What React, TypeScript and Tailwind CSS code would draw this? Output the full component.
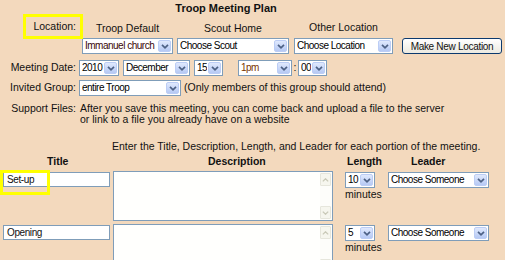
import React from "react";

const Chevron = () => (
  <svg width="8" height="5" viewBox="0 0 8 5">
    <path d="M1 0.8 L4 3.8 L7 0.8" fill="none" stroke="#4d6185" strokeWidth="1.7" />
  </svg>
);

type SelectProps = { value: string; width: string; color?: string };

const Select = ({ value, width, color = "text-black" }: SelectProps) => (
  <div className={`flex h-[16px] shrink-0 border border-[#7f9db9] bg-white ${width}`}>
    <span className={`flex-1 overflow-hidden whitespace-nowrap pl-[2px] text-[10px] leading-[14px] tracking-[-0.5px] ${color}`}>
      {value}
    </span>
    <span className="m-px flex w-[13px] items-center justify-center rounded-[2px] border border-[#bccdf5] bg-gradient-to-b from-[#e0e9fd] to-[#b6c9f4]">
      <Chevron />
    </span>
  </div>
);

const TextBox = ({ value }: { value: string }) => (
  <div className="h-[15px] w-[107px] border border-[#7f9db9] bg-white pl-[3px] text-[10px] leading-[13px] tracking-[-0.4px]">
    {value}
  </div>
);

const ScrollArrow = ({ up }: { up?: boolean }) => (
  <div className="flex h-[13px] w-[11px] items-center justify-center rounded-[1px] border border-[#e6e6dc] bg-[#f6f6ee]">
    <svg width="7" height="4" viewBox="0 0 7 4">
      <path
        d={up ? "M0.8 3.4 L3.5 0.8 L6.2 3.4" : "M0.8 0.6 L3.5 3.2 L6.2 0.6"}
        fill="none"
        stroke="#c9c9b8"
        strokeWidth="1.3"
      />
    </svg>
  </div>
);

const TextArea = () => (
  <div className="flex h-[50px] w-[220px] border border-[#7f9db9] bg-[#fffffd]">
    <div className="flex-1" />
    <div className="flex flex-col justify-between bg-[#fdfdfa] py-px pr-px">
      <ScrollArrow up />
      <ScrollArrow />
    </div>
  </div>
);

const portions = [
  { title: "Set-up", length: "10" },
  { title: "Opening", length: "5" },
];

export default function App() {
  return (
    <div className="relative h-[260px] w-[505px] overflow-hidden bg-[#f3d9bd] font-['Liberation_Sans',Arial,sans-serif] text-[10.5px] text-[#111]">
      <div className="w-[452px] pt-px text-center text-[11px] font-bold leading-[14px]">
        Troop Meeting Plan
      </div>

      {/* location */}
      <div className="mt-[6px] flex">
        <div className="-mt-[2px] w-[76px] text-right leading-[14px]">Location:</div>
        <div className="ml-[6px] flex w-[91px] flex-col items-center">
          <span className="leading-[14px]">Troop Default</span>
          <div className="mt-[3px]">
            <Select value="Immanuel church" width="w-[91px]" color="text-[#3a0808]" />
          </div>
        </div>
        <div className="ml-[4px] flex w-[112px] flex-col items-center">
          <span className="leading-[14px]">Scout Home</span>
          <div className="mt-[3px]">
            <Select value="Choose Scout" width="w-[112px]" />
          </div>
        </div>
        <div className="ml-[5px] flex w-[99px] flex-col items-center">
          <span className="-mt-px leading-[14px]">Other Location</span>
          <div className="mt-[4px]">
            <Select value="Choose Location" width="w-[99px]" />
          </div>
        </div>
        <div className="ml-[9px] mt-[17px]">
          <button className="h-[16px] w-[100px] rounded-[3px] border border-[#0c3a6e] bg-gradient-to-b from-white to-[#eceae0] text-[10px] leading-[13px] tracking-[-0.3px]">
            Make New Location
          </button>
        </div>
      </div>

      {/* meeting date */}
      <div className="mt-[6px] flex items-center">
        <div className="w-[76px] text-right">Meeting Date:</div>
        <div className="ml-[3px] flex items-center">
          <Select value="2010" width="w-[40px]" />
          <div className="ml-[4px]">
            <Select value="December" width="w-[67px]" />
          </div>
          <div className="ml-[4px]">
            <Select value="15" width="w-[29px]" />
          </div>
          <div className="ml-[15px]">
            <Select value="1pm" width="w-[54px]" color="text-[#7a3300]" />
          </div>
          <span className="w-[6px] text-center">:</span>
          <Select value="00" width="w-[29px]" />
        </div>
      </div>

      {/* invited group */}
      <div className="mt-[4px] flex items-center">
        <div className="w-[76px] text-right">Invited Group:</div>
        <div className="ml-[3px]">
          <Select value="entire Troop" width="w-[102px]" />
        </div>
        <span className="ml-[3px]">(Only members of this group should attend)</span>
      </div>

      {/* support files */}
      <div className="mt-[7px] flex leading-[11px]">
        <div className="w-[76px] text-right">Support Files:</div>
        <div className="ml-[4px]">
          After you save this meeting, you can come back and upload a file to the server
          <br />
          or link to a file you already have on a website
        </div>
      </div>

      <div className="mt-[15px] pl-[112px] leading-[12px]">
        Enter the Title, Description, Length, and Leader for each portion of the meeting.
      </div>

      <div className="mt-[3px] flex font-bold leading-[12px]">
        <span className="w-[208px] pl-[47px]">Title</span>
        <span className="w-[139px]">Description</span>
        <span className="w-[64px]">Length</span>
        <span>Leader</span>
      </div>

      <div className="mt-[4px] flex flex-col gap-[3px]">
        {portions.map((p) => (
          <div key={p.title} className="flex">
            <div className="w-[110px] pl-[3px] pt-px">
              <TextBox value={p.title} />
            </div>
            <div className="ml-[3px]">
              <TextArea />
            </div>
            <div className="ml-[12px] w-[43px] pt-px">
              <Select value={p.length} width="w-[30px]" />
              <div className="mt-px leading-[11px]">minutes</div>
            </div>
            <div className="pt-px">
              <Select value="Choose Someone" width="w-[101px]" />
            </div>
          </div>
        ))}
      </div>

      {/* highlight boxes */}
      <div className="absolute left-[23px] top-[14px] h-[25px] w-[60px] border-[3px] border-[#ffff00]" />
      <div className="absolute left-0 top-[170px] h-[25px] w-[50px] border-[3px] border-[#ffff00]" />
    </div>
  );
}
